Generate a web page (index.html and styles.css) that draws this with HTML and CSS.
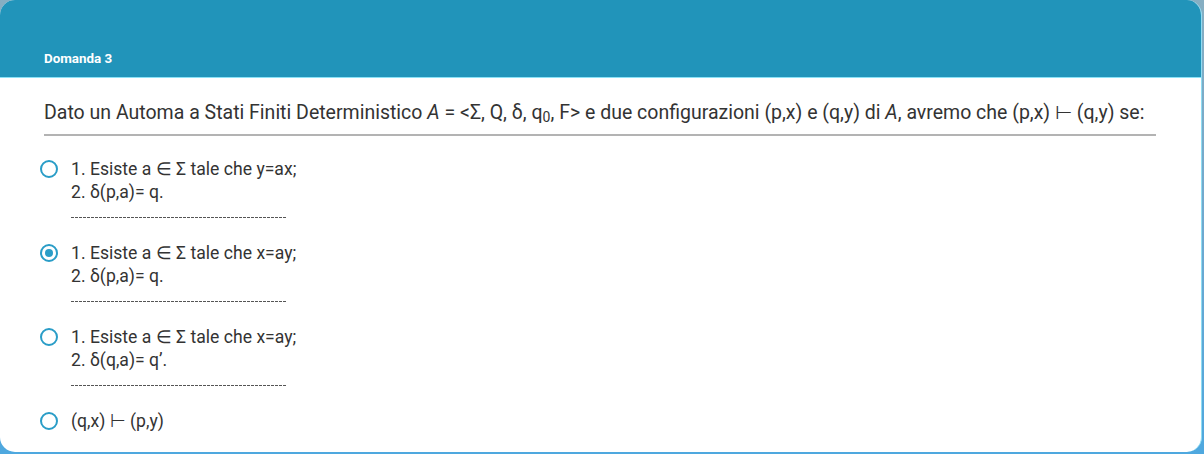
FILE: index.html
```html
<!DOCTYPE html>
<html lang="it">
<head>
<meta charset="utf-8">
<title>Domanda 3</title>
<link rel="stylesheet" href="styles.css">
</head>
<body>
<div class="card">
  <div class="card-header"><span class="title">Domanda 3</span></div>
  <div class="question">Dato un Automa a Stati Finiti Deterministico <i>A</i> = &lt;Σ, Q, δ, q<sub>0</sub>, F&gt; e due configurazioni (p,x) e (q,y) di <i>A</i>, avremo che (p,x) ⊢ (q,y) se:</div>
  <div class="options">
    <div class="option">
      <span class="radio"></span>
      <div class="opt-text">
        <div class="line">1. Esiste a ∈ Σ tale che y=ax;</div>
        <div class="line">2. δ(p,a)= q.</div>
        <div class="line dashes"></div>
      </div>
    </div>
    <div class="option">
      <span class="radio checked"></span>
      <div class="opt-text">
        <div class="line">1. Esiste a ∈ Σ tale che x=ay;</div>
        <div class="line">2. δ(p,a)= q.</div>
        <div class="line dashes"></div>
      </div>
    </div>
    <div class="option">
      <span class="radio"></span>
      <div class="opt-text">
        <div class="line">1. Esiste a ∈ Σ tale che x=ay;</div>
        <div class="line">2. δ(q,a)= q’.</div>
        <div class="line dashes"></div>
      </div>
    </div>
    <div class="option">
      <span class="radio"></span>
      <div class="opt-text">
        <div class="line">(q,x) ⊢ (p,y)</div>
      </div>
    </div>
  </div>
</div>
</body>
</html>
```
FILE: styles.css
```css
html, body {
  margin: 0;
  padding: 0;
}
body {
  width: 1204px;
  height: 454px;
  overflow: hidden;
  background: linear-gradient(180deg, #86aec2 0%, #6fa9cf 50%, #4ea8df 100%);
  font-family: Roboto, "Liberation Sans", sans-serif;
}
.card {
  width: 1202px;
  height: 452px;
  background: #fff;
  border-radius: 15px;
  overflow: hidden;
  border-right: 1px solid #8fdcf3;
  box-sizing: border-box;
}
.card-header {
  height: 78px;
  box-sizing: border-box;
  background: #2194ba;
  border-bottom: 1px solid #8be2f7;
  display: flex;
  align-items: flex-end;
  padding: 0 0 11px 44px;
}
.title {
  color: #fff;
  font-weight: 700;
  font-size: 13.4px;
  line-height: 14px;
}
.question {
  margin: 0 45px 0 44px;
  padding: 23px 0 9px;
  border-bottom: 2px solid #b3b3b3;
  font-size: 19.5px;
  line-height: 24px;
  color: #333;
  white-space: nowrap;
}
.question sub {
  font-size: 14px;
  line-height: 0;
  vertical-align: -3px;
}
.options {
  padding: 22px 0 0 40px;
  display: flex;
  flex-direction: column;
  gap: 15px;
}
.option {
  display: flex;
  align-items: flex-start;
  gap: 13px;
}
.radio {
  flex: none;
  width: 18px;
  height: 18px;
  margin-top: 2px;
  box-sizing: border-box;
  border: 2px solid #2a9dc7;
  border-radius: 50%;
  display: flex;
  align-items: center;
  justify-content: center;
}
.radio.checked::after {
  content: "";
  width: 8px;
  height: 8px;
  border-radius: 50%;
  background: #2a9dc7;
}
.opt-text {
  font-size: 17.6px;
  line-height: 23px;
  color: #333;
}
.line {
  height: 23px;
}
.dashes {
  width: 215px;
  background: repeating-linear-gradient(90deg, #555 0 3px, transparent 3px 4px) 0 13px / 100% 1px no-repeat;
}
```
